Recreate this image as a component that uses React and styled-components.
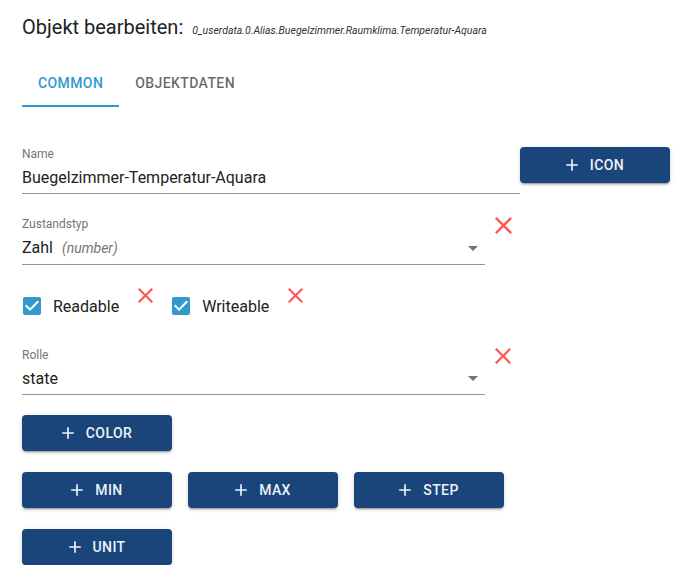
import styled, { createGlobalStyle } from 'styled-components';

const GlobalStyle = createGlobalStyle`
    body {
        margin: 0;
        background: #ffffff;
        font-family: Roboto, "Liberation Sans", sans-serif;
    }
`;

const Page = styled.div`
    display: flex;
    flex-direction: column;
    padding: 15px 23px 0 22px;
    color: rgba(0, 0, 0, 0.87);
`;

const Header = styled.div`
    display: flex;
    align-items: baseline;
    gap: 9px;
`;

const Title = styled.h1`
    margin: 0;
    font-size: 20px;
    line-height: 24px;
    font-weight: 400;
    color: #222222;
`;

const ObjectId = styled.span`
    font-size: 10.5px;
    font-style: italic;
    color: #333333;
`;

const TabBar = styled.div`
    display: flex;
    margin-top: 20px;
`;

const Tab = styled.div`
    display: flex;
    align-items: center;
    height: 48px;
    box-sizing: border-box;
    padding: 2px 16px 0 16px;
    font-size: 14px;
    font-weight: 500;
    letter-spacing: 0.4px;
    text-transform: uppercase;
    color: ${props => props.$active ? '#3399cc' : 'rgba(0, 0, 0, 0.6)'};
    border-bottom: 2px solid ${props => props.$active ? '#3399cc' : 'transparent'};
`;

const Row = styled.div`
    display: flex;
    align-items: flex-start;
    margin-top: ${props => props.$top}px;
`;

const Field = styled.div`
    display: flex;
    flex-direction: column;
    flex: ${props => props.$width ? 'none' : '1'};
    width: ${props => props.$width ? props.$width + 'px' : 'auto'};
    padding-bottom: 6px;
    border-bottom: 1px solid #949494;
`;

const FieldLabel = styled.div`
    font-size: 12px;
    line-height: 14px;
    color: #757575;
    margin-bottom: 7px;
`;

const FieldValue = styled.div`
    display: flex;
    align-items: center;
    justify-content: space-between;
    font-size: 16px;
    line-height: 19px;
    color: #222222;
`;

const Hint = styled.span`
    font-size: 14px;
    font-style: italic;
    color: #757575;
    margin-left: 9px;
`;

const Arrow = styled.svg`
    width: 10px;
    height: 5px;
    margin-right: 7px;
    fill: #757575;
`;

const DeleteMark = styled.svg`
    flex: none;
    align-self: flex-start;
    width: ${props => props.$size}px;
    height: ${props => props.$size}px;
    margin-left: ${props => props.$left}px;
    margin-top: ${props => props.$shift || 0}px;
    fill: #ff5555;
`;

const CheckRow = styled.div`
    display: flex;
    align-items: center;
    height: 42px;
    margin-top: 20px;
    padding-left: 1px;
`;

const CheckBox = styled.svg`
    flex: none;
    width: 18px;
    height: 18px;
    margin-left: ${props => props.$left || 0}px;
    fill: #3399cc;
`;

const CheckLabel = styled.span`
    font-size: 16px;
    line-height: 19px;
    margin-left: 12px;
    color: #222222;
`;

const ButtonStack = styled.div`
    display: flex;
    flex-direction: column;
    gap: 21px;
    margin-top: 20px;
`;

const ButtonRow = styled.div`
    display: flex;
    gap: 16px;
`;

const ActionButton = styled.button`
    flex: none;
    display: flex;
    align-items: center;
    justify-content: center;
    width: 150px;
    height: 36px;
    padding: 0 16px;
    border: none;
    border-radius: 4px;
    background: #19457a;
    color: #eef2f7;
    font-family: Roboto, "Liberation Sans", sans-serif;
    font-size: 14px;
    font-weight: 500;
    letter-spacing: 0.4px;
    text-transform: uppercase;
    box-shadow: 0 3px 1px -2px rgba(0, 0, 0, 0.2), 0 2px 2px 0 rgba(0, 0, 0, 0.14), 0 1px 5px 0 rgba(0, 0, 0, 0.12);
`;

const PlusIcon = styled.svg`
    width: 20px;
    height: 20px;
    margin: 0 8px 0 -4px;
    fill: currentColor;
`;

function Plus() {
    return (
        <PlusIcon viewBox="0 0 24 24">
            <path d="M19 13h-6v6h-2v-6H5v-2h6V5h2v6h6v2z" />
        </PlusIcon>
    );
}

function Cross({ size = 17, left = 10, shift = 0 }) {
    return (
        <DeleteMark viewBox="5 5 14 14" $size={size} $left={left} $shift={shift}>
            <path d="M19 6.41L17.59 5 12 10.59 6.41 5 5 6.41 10.59 12 5 17.59 6.41 19 12 13.41 17.59 19 19 17.59 13.41 12z" />
        </DeleteMark>
    );
}

function Checked({ left }) {
    return (
        <CheckBox viewBox="3 3 18 18" $left={left}>
            <path d="M19 3H5c-1.11 0-2 .9-2 2v14c0 1.1.89 2 2 2h14c1.11 0 2-.9 2-2V5c0-1.1-.89-2-2-2zm-9 14l-5-5 1.41-1.41L10 14.17l7.59-7.59L19 8l-9 9z" />
        </CheckBox>
    );
}

function DropArrow() {
    return (
        <Arrow viewBox="7 10 10 5">
            <path d="M7 10l5 5 5-5z" />
        </Arrow>
    );
}

function AddButton({ label }) {
    return (
        <ActionButton>
            <Plus />
            {label}
        </ActionButton>
    );
}

export default function App() {
    return (
        <Page>
            <GlobalStyle />
            <Header>
                <Title>Objekt bearbeiten:</Title>
                <ObjectId>0_userdata.0.Alias.Buegelzimmer.Raumklima.Temperatur-Aquara</ObjectId>
            </Header>

            <TabBar>
                <Tab $active>Common</Tab>
                <Tab>Objektdaten</Tab>
            </TabBar>

            <Row $top={40}>
                <Field>
                    <FieldLabel>Name</FieldLabel>
                    <FieldValue>Buegelzimmer-Temperatur-Aquara</FieldValue>
                </Field>
                <AddButton label="Icon" />
            </Row>

            <Row $top={23}>
                <Field $width={463}>
                    <FieldLabel>Zustandstyp</FieldLabel>
                    <FieldValue>
                        <span>Zahl<Hint>(number)</Hint></span>
                        <DropArrow />
                    </FieldValue>
                </Field>
                <Cross />
            </Row>

            <CheckRow>
                <Checked />
                <CheckLabel>Readable</CheckLabel>
                <Cross size={15} left={19} shift={3} />
                <Checked left={19} />
                <CheckLabel>Writeable</CheckLabel>
                <Cross size={15} left={19} shift={3} />
            </CheckRow>

            <Row $top={21}>
                <Field $width={463}>
                    <FieldLabel>Rolle</FieldLabel>
                    <FieldValue>
                        <span>state</span>
                        <DropArrow />
                    </FieldValue>
                </Field>
                <Cross size={16} />
            </Row>

            <ButtonStack>
                <ButtonRow>
                    <AddButton label="Color" />
                </ButtonRow>
                <ButtonRow>
                    <AddButton label="Min" />
                    <AddButton label="Max" />
                    <AddButton label="Step" />
                </ButtonRow>
                <ButtonRow>
                    <AddButton label="Unit" />
                </ButtonRow>
            </ButtonStack>
        </Page>
    );
}
